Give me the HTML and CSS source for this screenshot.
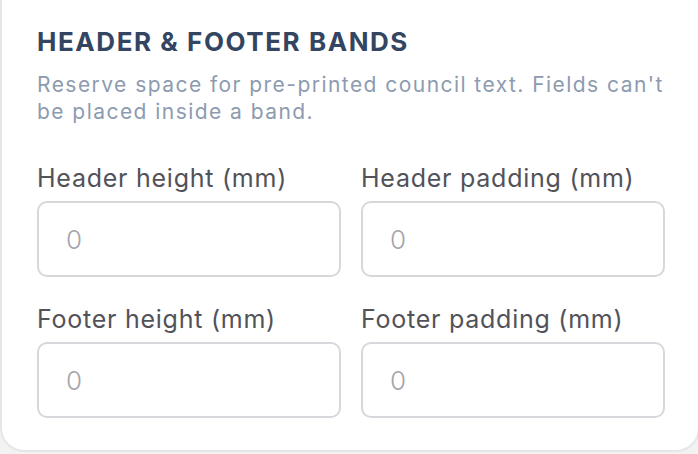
FILE: index.html
```html
<!DOCTYPE html>
<html>
<head>
<meta charset="utf-8">
<link rel="stylesheet" href="styles.css">
</head>
<body>
<section class="card">
  <h2 class="title">HEADER &amp; FOOTER BANDS</h2>
  <p class="desc">Reserve space for pre-printed council text. Fields can't be placed inside a band.</p>
  <div class="grid">
    <label class="field">
      <span class="label">Header height (mm)</span>
      <input class="input" type="text" placeholder="0">
    </label>
    <label class="field">
      <span class="label">Header padding (mm)</span>
      <input class="input" type="text" placeholder="0">
    </label>
    <label class="field">
      <span class="label">Footer height (mm)</span>
      <input class="input" type="text" placeholder="0">
    </label>
    <label class="field">
      <span class="label">Footer padding (mm)</span>
      <input class="input" type="text" placeholder="0">
    </label>
  </div>
</section>
</body>
</html>
```
FILE: styles.css
```css
html, body {
  margin: 0;
  padding: 0;
  background: #f2f2f3;
  overflow: hidden;
  height: 454px;
}
body {
  font-family: Inter, "Noto Sans", sans-serif;
}
.card {
  box-sizing: border-box;
  width: 700px;
  height: 452px;
  background: #ffffff;
  border: 2px solid #e6e6e8;
  border-top: none;
  border-radius: 0 0 24px 24px;
  padding: 26px 33px 0 35px;
}
.title {
  margin: 0;
  font-size: 26px;
  line-height: 32px;
  font-weight: 700;
  letter-spacing: 0.06em;
  color: #334561;
}
.desc {
  margin: 13px -14px 0 0;
  font-size: 21px;
  line-height: 27px;
  letter-spacing: 1.45px;
  color: #8d9bb0;
}
.grid {
  display: grid;
  grid-template-columns: 1fr 1fr;
  column-gap: 20px;
  row-gap: 27px;
  margin-top: 38px;
}
.field {
  display: flex;
  flex-direction: column;
  gap: 8px;
}
.label {
  font-size: 25px;
  line-height: 30px;
  letter-spacing: 0.03em;
  color: #525259;
}
.input {
  box-sizing: border-box;
  width: 100%;
  height: 76px;
  border: 2px solid #d8d8dc;
  border-radius: 10px;
  padding: 0 27px;
  font-family: Inter, "Noto Sans", sans-serif;
  font-size: 26px;
  font-weight: 300;
  color: #333;
  background: #fff;
  outline: none;
}
.input::placeholder {
  color: #a4a4aa;
}
```
